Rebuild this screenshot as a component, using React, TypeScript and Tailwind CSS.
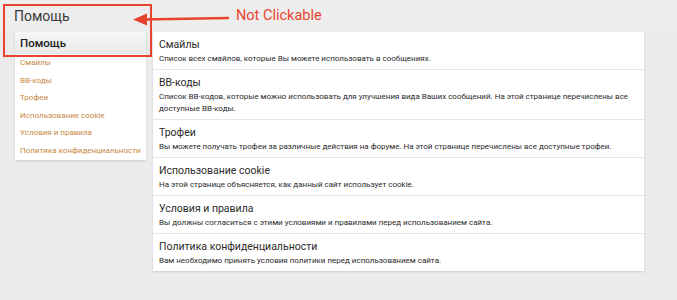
import React from 'react';

const links = [
  'Смайлы',
  'BB-коды',
  'Трофеи',
  'Использование cookie',
  'Условия и правила',
  'Политика конфиденциальности',
];

const items = [
  { title: 'Смайлы', desc: 'Список всех смайлов, которые Вы можете использовать в сообщениях.' },
  {
    title: 'BB-коды',
    desc: 'Список BB-кодов, которые можно использовать для улучшения вида Ваших сообщений. На этой странице перечислены все доступные BB-коды.',
  },
  {
    title: 'Трофеи',
    desc: 'Вы можете получать трофеи за различные действия на форуме. На этой странице перечислены все доступные трофеи.',
  },
  { title: 'Использование cookie', desc: 'На этой странице объясняется, как данный сайт использует cookie.' },
  { title: 'Условия и правила', desc: 'Вы должны согласиться с этими условиями и правилами перед использованием сайта.' },
  { title: 'Политика конфиденциальности', desc: 'Вам необходимо принять условия политики перед использованием сайта.' },
];

export default function App() {
  return (
    <div className="relative h-[300px] w-[677px] overflow-hidden bg-[#ebebeb] font-['Roboto','Liberation_Sans',sans-serif] text-[#222]">
      {/* page header */}
      <div className="h-[32px] bg-[#ededed] pl-[14px] pt-[6px]">
        <h1 className="text-[14px] leading-[20px] text-[#3a3a3a]">Помощь</h1>
      </div>

      <div className="flex gap-[7px] pl-[15px]">
        {/* sidebar */}
        <div className="w-[131px] self-start bg-white shadow-[0_1px_2px_rgba(0,0,0,0.12)]">
          <div className="h-[22px] bg-gradient-to-b from-[#f7f7f7] to-[#e9e9e9] pl-[5px] text-[11.5px] font-medium leading-[22px] text-[#222]">
            Помощь
          </div>
          <ul>
            {links.map((l) => (
              <li key={l} className="h-[17.6px] whitespace-nowrap pl-[5px] text-[8px] leading-[17.6px] text-[#c8873f]">
                {l}
              </li>
            ))}
          </ul>
        </div>

        {/* main list */}
        <div className="w-[491px] self-start bg-white shadow-[0_1px_2px_rgba(0,0,0,0.12)]">
          {items.map((it, i) => (
            <div
              key={it.title}
              className={`pl-[6px] pr-[10px] pt-[6px] pb-[4px] ${i < items.length - 1 ? 'border-b border-[#e6e6e6]' : ''}`}
            >
              <div className="text-[10.5px] leading-[14px] text-[#2a2a2a]">{it.title}</div>
              <div className="mt-[1px] text-[8px] leading-[12px] text-[#2a2a2a]">{it.desc}</div>
            </div>
          ))}
        </div>
      </div>

      {/* annotation overlay */}
      <div className="pointer-events-none absolute left-[3px] top-[4px] h-[53px] w-[149px] border-[2.5px] border-[#e8432f]" />
      <svg className="pointer-events-none absolute left-[130px] top-[10px]" width="100" height="20" viewBox="0 0 100 20">
        <line x1="12" y1="9.5" x2="99" y2="8" stroke="#e8432f" strokeWidth="2.5" />
        <polygon points="3,9.5 17,3.5 17,15.5" fill="#e8432f" />
      </svg>
      <div className="pointer-events-none absolute left-[236px] top-[7px] text-[14.5px] leading-[18px] text-[#e8432f]">
        Not Clickable
      </div>
    </div>
  );
}
